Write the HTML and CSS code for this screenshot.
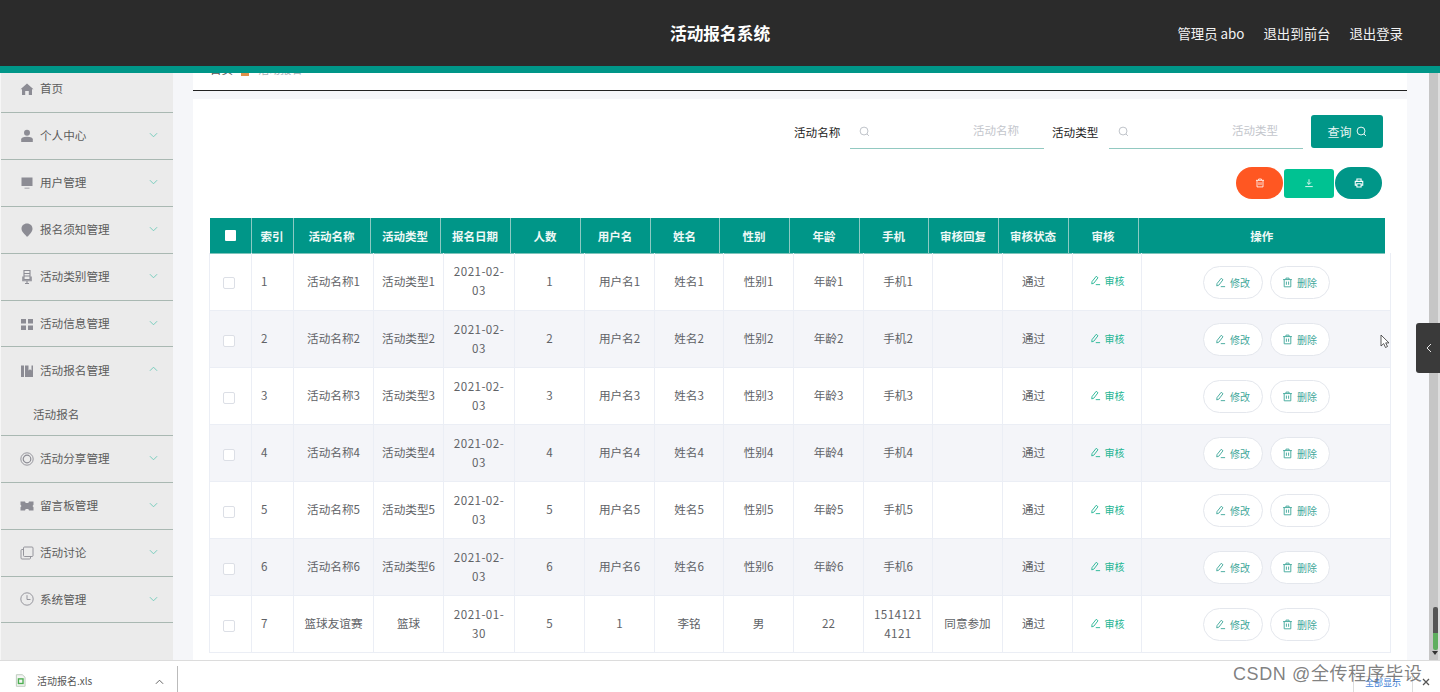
FILE: index.html
```html
<!DOCTYPE html>
<html lang="zh-CN">
<head>
<meta charset="utf-8">
<title>活动报名系统</title>
<link rel="stylesheet" href="styles.css">
</head>
<body>
<svg class="sprite" aria-hidden="true">
  <symbol id="i-pen" viewBox="0 0 12 12"><path d="M6.8 1.4 8.7 3 4.2 8.9 1.9 9.7 2.2 7.2Z" fill="none" stroke="currentColor"/><path d="M6.3 10.5H11" fill="none" stroke="currentColor"/></symbol>
  <symbol id="i-trash" viewBox="0 0 12 12"><path d="M1.2 2.8H10.800M4.300 2.500V1.200H7.700V2.500M2.400 2.800V10.700H9.600V2.800M4.800 5V8.500M7.200 5V8.500" fill="none" stroke="currentColor"/></symbol>
  <symbol id="i-search" viewBox="0 0 12 12"><circle cx="5.500" cy="5.500" r="4.300" fill="none" stroke="currentColor"/><path d="M8.700 8.700 10.800 10.800" fill="none" stroke="currentColor"/></symbol>
  <symbol id="i-down" viewBox="0 0 12 12"><path d="M6 1.500V7.500M3.500 5.200 6 7.700 8.500 5.200M1.500 10.300H10.500" fill="none" stroke="currentColor"/></symbol>
  <symbol id="i-print" viewBox="0 0 12 12"><path d="M3.500 4V1.200H8.500V4M3.500 8.500H1.500V4H10.500V8.500H8.500M3.500 6.800H8.500V10.800H3.500Z" fill="none" stroke="currentColor" stroke-width="1.300"/></symbol>
  <symbol id="i-chev" viewBox="0 0 10 6"><path d="M1 1 5 5 9 1" fill="none" stroke="currentColor"/></symbol>
  <symbol id="i-chev-up" viewBox="0 0 10 6"><path d="M1 5 5 1 9 5" fill="none" stroke="currentColor"/></symbol>
  <symbol id="m-home" viewBox="0 0 14 14"><path d="M7 1.500 13.500 7.300 12 7.300V13H8.800V9H5.200V13H2V7.300H.5Z" fill="currentColor"/></symbol>
  <symbol id="m-user" viewBox="0 0 14 14"><circle cx="7" cy="3.800" r="3" fill="currentColor"/><path d="M1.200 13V10.300C1.200 8.800 3 7.800 7 7.800S12.800 8.800 12.800 10.300V13Z" fill="currentColor"/></symbol>
  <symbol id="m-screen" viewBox="0 0 14 14"><path d="M1.500 1.500H12.500V10H1.500ZM4.500 11.700H9.500V12.500H4.500Z" fill="currentColor"/></symbol>
  <symbol id="m-pin" viewBox="0 0 14 14"><path d="M7 .5C10.300.5 12.500 2.800 12.500 5.700 12.500 9 9.500 11.300 7.800 13.500H6.500C5.800 11.500 1.500 9.300 1.500 5.700 1.500 2.800 3.700.5 7 .5Z" fill="currentColor"/></symbol>
  <symbol id="m-mic" viewBox="0 0 14 14"><path d="M4 .5H10V9.500H4ZM2.800 6.500V10.800H11.200V6.500M5 13.500H9M7 10.800V13.500M4.500 3.500H9.500M4.500 6H9.500" fill="none" stroke="currentColor" stroke-width="1.100"/></symbol>
  <symbol id="m-grid" viewBox="0 0 14 14"><path d="M1 2H6V6.500H1ZM8 2H13V6.500H8ZM1 8.500H6V13H1ZM8 8.500H13V13H8Z" fill="currentColor"/></symbol>
  <symbol id="m-book" viewBox="0 0 14 14"><path d="M1 1.500H4V13H1ZM5 1.500H8.500V6.500L10 5.200 11.500 6.500V1.500H13V13H5Z" fill="currentColor"/></symbol>
  <symbol id="m-ring" viewBox="0 0 14 14"><circle cx="7" cy="7" r="6.200" fill="none" stroke="currentColor" stroke-width=".9"/><circle cx="7" cy="7" r="3.800" fill="none" stroke="currentColor" stroke-width="1.200"/></symbol>
  <symbol id="m-ticket" viewBox="0 0 14 14"><path d="M.5 2.500H5L5.700 4H8.300L9 2.500H13.500V5.700L12.500 7 13.500 8.300V11.500H9L8.300 10H5.700L5 11.500H.5V8.300L1.500 7 .5 5.700Z" fill="currentColor"/></symbol>
  <symbol id="m-copy" viewBox="0 0 14 14"><path d="M4.500 1H12A1 1 0 0 1 13 2V9.500A1 1 0 0 1 12 10.500H4.500A1 1 0 0 1 3.500 9.500V2A1 1 0 0 1 4.500 1ZM3.500 3.500H2A1 1 0 0 0 1 4.500V12A1 1 0 0 0 2 13H9.500A1 1 0 0 0 10.500 12V10.500" fill="none" stroke="currentColor" stroke-width=".9"/></symbol>
  <symbol id="m-clock" viewBox="0 0 14 14"><circle cx="7" cy="7" r="6.200" fill="none" stroke="currentColor" stroke-width=".9"/><path d="M7 3.200V7.500H10.500" fill="none" stroke="currentColor" stroke-width=".9"/></symbol>
</svg>

<header class="topbar">
  <div class="brand">活动报名系统</div>
  <nav class="top-links"><span>管理员 abo</span><span>退出到前台</span><span>退出登录</span></nav>
</header>

<div class="workspace">
  <aside class="sidebar">
    <div class="menu-item first"><svg class="m-icon"><use href="#m-home"/></svg><span>首页</span></div>
    <div class="menu-item"><svg class="m-icon"><use href="#m-user"/></svg><span>个人中心</span><svg class="chev"><use href="#i-chev"/></svg></div>
    <div class="menu-item"><svg class="m-icon"><use href="#m-screen"/></svg><span>用户管理</span><svg class="chev"><use href="#i-chev"/></svg></div>
    <div class="menu-item"><svg class="m-icon"><use href="#m-pin"/></svg><span>报名须知管理</span><svg class="chev"><use href="#i-chev"/></svg></div>
    <div class="menu-item"><svg class="m-icon"><use href="#m-mic"/></svg><span>活动类别管理</span><svg class="chev"><use href="#i-chev"/></svg></div>
    <div class="menu-item"><svg class="m-icon"><use href="#m-grid"/></svg><span>活动信息管理</span><svg class="chev"><use href="#i-chev"/></svg></div>
    <div class="menu-group">
      <div class="menu-head"><svg class="m-icon"><use href="#m-book"/></svg><span>活动报名管理</span><svg class="chev"><use href="#i-chev-up"/></svg></div>
      <div class="menu-sub">活动报名</div>
    </div>
    <div class="menu-item"><svg class="m-icon"><use href="#m-ring"/></svg><span>活动分享管理</span><svg class="chev"><use href="#i-chev"/></svg></div>
    <div class="menu-item"><svg class="m-icon"><use href="#m-ticket"/></svg><span>留言板管理</span><svg class="chev"><use href="#i-chev"/></svg></div>
    <div class="menu-item"><svg class="m-icon"><use href="#m-copy"/></svg><span>活动讨论</span><svg class="chev"><use href="#i-chev"/></svg></div>
    <div class="menu-item"><svg class="m-icon"><use href="#m-clock"/></svg><span>系统管理</span><svg class="chev"><use href="#i-chev"/></svg></div>
  </aside>

  <main class="main">
    <div class="crumbs"><span class="crumb-home">首页</span><i class="crumb-dot"></i><span class="crumb-now">活动报名</span></div>
    <section class="panel">
      <form class="search">
        <label class="s-label">活动名称</label>
        <div class="s-field"><svg class="s-icon"><use href="#i-search"/></svg><input class="s-input" placeholder="活动名称"></div>
        <label class="s-label s-label2">活动类型</label>
        <div class="s-field"><svg class="s-icon"><use href="#i-search"/></svg><input class="s-input" placeholder="活动类型"></div>
        <button class="s-btn" type="button">查询<svg class="s-btn-icon"><use href="#i-search"/></svg></button>
      </form>
      <div class="tools">
        <button class="tool tool-del" type="button"><svg class="tool-icon"><use href="#i-trash"/></svg></button>
        <button class="tool tool-down" type="button"><svg class="tool-icon"><use href="#i-down"/></svg></button>
        <button class="tool tool-print" type="button"><svg class="tool-icon"><use href="#i-print"/></svg></button>
      </div>

      <table class="thead">
        <colgroup><col class="h0"><col class="h1"><col class="h2"><col class="h3"><col class="h4"><col class="h5"><col class="h6"><col class="h7"><col class="h8"><col class="h9"><col class="h10"><col class="h11"><col class="h12"><col class="h13"><col class="h14"></colgroup>
        <tr><th><i class="head-check"></i></th><th>索引</th><th>活动名称</th><th>活动类型</th><th>报名日期</th><th>人数</th><th>用户名</th><th>姓名</th><th>性别</th><th>年龄</th><th>手机</th><th>审核回复</th><th>审核状态</th><th>审核</th><th>操作</th></tr>
      </table>

      <table class="tbody">
        <colgroup><col class="b0"><col class="b1"><col class="b2"><col class="b3"><col class="b4"><col class="b5"><col class="b6"><col class="b7"><col class="b8"><col class="b9"><col class="b10"><col class="b11"><col class="b12"><col class="b13"><col class="b14"></colgroup>
        <tr><td><i class="check"></i></td><td class="idx">1</td><td>活动名称1</td><td>活动类型1</td><td>2021-02-03</td><td>1</td><td>用户名1</td><td>姓名1</td><td>性别1</td><td>年龄1</td><td>手机1</td><td></td><td class="status">通过</td><td><span class="audit"><svg class="a-icon"><use href="#i-pen"/></svg>审核</span></td><td><div class="ops"><span class="op"><svg class="a-icon"><use href="#i-pen"/></svg>修改</span><span class="op"><svg class="a-icon"><use href="#i-trash"/></svg>删除</span></div></td></tr>
        <tr><td><i class="check"></i></td><td class="idx">2</td><td>活动名称2</td><td>活动类型2</td><td>2021-02-03</td><td>2</td><td>用户名2</td><td>姓名2</td><td>性别2</td><td>年龄2</td><td>手机2</td><td></td><td class="status">通过</td><td><span class="audit"><svg class="a-icon"><use href="#i-pen"/></svg>审核</span></td><td><div class="ops"><span class="op"><svg class="a-icon"><use href="#i-pen"/></svg>修改</span><span class="op"><svg class="a-icon"><use href="#i-trash"/></svg>删除</span></div></td></tr>
        <tr><td><i class="check"></i></td><td class="idx">3</td><td>活动名称3</td><td>活动类型3</td><td>2021-02-03</td><td>3</td><td>用户名3</td><td>姓名3</td><td>性别3</td><td>年龄3</td><td>手机3</td><td></td><td class="status">通过</td><td><span class="audit"><svg class="a-icon"><use href="#i-pen"/></svg>审核</span></td><td><div class="ops"><span class="op"><svg class="a-icon"><use href="#i-pen"/></svg>修改</span><span class="op"><svg class="a-icon"><use href="#i-trash"/></svg>删除</span></div></td></tr>
        <tr><td><i class="check"></i></td><td class="idx">4</td><td>活动名称4</td><td>活动类型4</td><td>2021-02-03</td><td>4</td><td>用户名4</td><td>姓名4</td><td>性别4</td><td>年龄4</td><td>手机4</td><td></td><td class="status">通过</td><td><span class="audit"><svg class="a-icon"><use href="#i-pen"/></svg>审核</span></td><td><div class="ops"><span class="op"><svg class="a-icon"><use href="#i-pen"/></svg>修改</span><span class="op"><svg class="a-icon"><use href="#i-trash"/></svg>删除</span></div></td></tr>
        <tr><td><i class="check"></i></td><td class="idx">5</td><td>活动名称5</td><td>活动类型5</td><td>2021-02-03</td><td>5</td><td>用户名5</td><td>姓名5</td><td>性别5</td><td>年龄5</td><td>手机5</td><td></td><td class="status">通过</td><td><span class="audit"><svg class="a-icon"><use href="#i-pen"/></svg>审核</span></td><td><div class="ops"><span class="op"><svg class="a-icon"><use href="#i-pen"/></svg>修改</span><span class="op"><svg class="a-icon"><use href="#i-trash"/></svg>删除</span></div></td></tr>
        <tr><td><i class="check"></i></td><td class="idx">6</td><td>活动名称6</td><td>活动类型6</td><td>2021-02-03</td><td>6</td><td>用户名6</td><td>姓名6</td><td>性别6</td><td>年龄6</td><td>手机6</td><td></td><td class="status">通过</td><td><span class="audit"><svg class="a-icon"><use href="#i-pen"/></svg>审核</span></td><td><div class="ops"><span class="op"><svg class="a-icon"><use href="#i-pen"/></svg>修改</span><span class="op"><svg class="a-icon"><use href="#i-trash"/></svg>删除</span></div></td></tr>
        <tr><td><i class="check"></i></td><td class="idx">7</td><td>篮球友谊赛</td><td>篮球</td><td>2021-01-30</td><td>5</td><td>1</td><td>李铭</td><td>男</td><td>22</td><td class="phone">15141214121</td><td>同意参加</td><td class="status">通过</td><td><span class="audit"><svg class="a-icon"><use href="#i-pen"/></svg>审核</span></td><td><div class="ops"><span class="op"><svg class="a-icon"><use href="#i-pen"/></svg>修改</span><span class="op"><svg class="a-icon"><use href="#i-trash"/></svg>删除</span></div></td></tr>
      </table>
    </section>
  </main>

  <div class="gutter"></div>
  <div class="scrollbar"><div class="thumb"></div><i class="scroll-arrow"></i></div>
</div>

<footer class="downloads">
  <div class="dl-file">
    <svg class="dl-icon" viewBox="0 0 12 14"><path d="M1.500.7H8L11 3.500V13.300H1.500Z" fill="#f4f4f4" stroke="#b9c9b9"/><rect x="3" y="4.500" width="6.500" height="6.500" fill="#4caf50"/><rect x="4.500" y="6" width="3.500" height="3.500" fill="#f4f4f4"/></svg>
    <span class="dl-name">活动报名.xls</span>
    <svg class="dl-chev"><use href="#i-chev-up"/></svg>
  </div>
  <div class="dl-all">全部显示</div>
  <svg class="dl-close" viewBox="0 0 8 8"><path d="M1 1 7 7M7 1 1 7" fill="none" stroke="#555" stroke-width="1.300"/></svg>
</footer>

<div class="handle"><svg class="handle-chev" viewBox="0 0 6 10"><path d="M5 1 1 5 5 9" fill="none" stroke="#e8e8e8"/></svg></div>
<svg class="cursor" viewBox="0 0 10 15"><path d="M1 1V12L3.700 9.600 5.500 13.500 7.500 12.500 5.700 8.900H9Z" fill="#fff" stroke="#333" stroke-width=".8"/></svg>
<div class="watermark">CSDN @全传程序毕设</div>
</body>
</html>
```
FILE: styles.css
```css
* { box-sizing: border-box; }
html, body { margin: 0; height: 100%; overflow: hidden; }
body {
  width: 1440px;
  height: 692px;
  position: relative;
  display: flex;
  flex-direction: column;
  font-family: "Noto Sans CJK SC", "Noto Sans", sans-serif;
  font-size: 11.6px;
  color: #606266;
  background: #f5f6f9;
}
i { display: block; }
.sprite { width: 0; height: 0; position: absolute; }

/* top bar */
.topbar {
  flex: 0 0 73px;
  display: flex;
  align-items: center;
  justify-content: flex-end;
  padding: 0 37px 0 0;
  background: #2b2b2b;
  border-bottom: 7px solid #009688;
  position: relative;
  color: #fff;
}
.brand {
  position: absolute;
  left: 670px;
  top: 21px;
  font-size: 16.7px;
  line-height: 24px;
  font-weight: 700;
}
.top-links { display: flex; gap: 19px; font-size: 13.4px; line-height: 20px; color: #f2f2f2; }

/* workspace */
.workspace { flex: 0 0 587px; display: flex; overflow: hidden; }

.sidebar {
  flex: 0 0 173px;
  background: #ebebeb;
  border-left: 1px solid #f6f6f6;
  color: #5c5c5c;
}
.menu-item, .menu-head {
  height: 46.9px;
  display: flex;
  align-items: center;
  padding-left: 19px;
  position: relative;
}
.menu-item span, .menu-head span { margin-top: -1px; }
.menu-item { border-bottom: 1px solid #a9b8b2; }
.menu-item.first { height: 40px; padding-bottom: 8px; }
.menu-group { height: 88.4px; border-bottom: 1px solid #a9b8b2; }
.menu-sub { padding-left: 32px; line-height: 17px; margin-top: 12px; }
.m-icon { width: 14px; height: 14px; color: #8c8c94; margin-right: 6px; flex: none; }
.chev { width: 9px; height: 6px; color: #6cc9b8; position: absolute; left: 148px; top: 19px; }

/* main */
.main { flex: 0 0 1214px; min-width: 0; margin-left: 20px; display: flex; flex-direction: column; }
.crumbs {
  flex: 0 0 18px;
  background: #fff;
  border-bottom: 1px solid #222;
  display: flex;
  align-items: flex-end;
  overflow: hidden;
  padding: 0 0 14px 17px;
  color: #555;
  line-height: 14px;
}
.crumb-dot { width: 8px; height: 8px; margin: 0 9px 0 8px; background: #e0914b; }
.crumb-now { color: #a9b0b5; font-size: 11px; }

.panel {
  margin-top: 8px;
  flex: 1;
  background: #fff;
  padding: 16px 17px 0 16px;
}
.search { display: flex; justify-content: flex-end; align-items: center; height: 33px; margin-right: 7px; }
.s-label { color: #222; width: 46px; white-space: nowrap; margin-right: 10px; padding-top: 1px; }
.s-label2 { margin-left: 8px; margin-right: 11px; }
.s-field {
  width: 194px;
  height: 34px;
  border-bottom: 1px solid #92c9c1;
  display: flex;
  align-items: center;
  padding-left: 9px;
}
.s-icon { width: 11px; height: 11px; color: #b9bdc4; flex: none; }
.s-input {
  flex: 1;
  min-width: 0;
  border: 0;
  outline: 0;
  background: transparent;
  text-align: right;
  padding: 0 25px 2px 0;
  font: 11.5px/16px "Noto Sans CJK SC", sans-serif;
}
.s-input::placeholder { color: #c3c6cc; opacity: 1; }
.s-btn {
  width: 72px;
  height: 33px;
  margin-left: 8px;
  border: 0;
  border-radius: 3px;
  background: #009688;
  color: #e8f5f3;
  font: 12px/16px "Noto Sans CJK SC", sans-serif;
  display: flex;
  align-items: center;
  justify-content: center;
  gap: 4px;
  padding: 0;
}
.s-btn-icon { width: 11px; height: 11px; color: #fff; }

.tools { display: flex; justify-content: flex-end; align-items: center; height: 32px; margin-top: 19px; padding-right: 8px; gap: 1px; }
.tool { border: 0; padding: 0; display: flex; align-items: center; justify-content: center; color: #fff; }
.tool-icon { width: 10px; height: 10px; }
.tool-del { width: 47px; height: 32px; border-radius: 16px; background: #ff5722; }
.tool-down { width: 50px; height: 29px; border-radius: 3px; background: #00c292; }
.tool-print { width: 47px; height: 32px; border-radius: 16px; background: #009688; }

/* tables */
table { border-collapse: collapse; table-layout: fixed; }
.thead { width: 1175px; height: 36px; margin: 19px 0 0 1px; background: #009688; color: #eef8f6; }
.thead th { padding: 0; font-size: 11.5px; font-weight: 700; border-left: 1px solid #8ccac3; border-bottom: 1px solid #7ec4bb; }
.thead th:first-child { border-left: 0; }
.h0 { width: 41px; } .h1 { width: 42px; } .h2 { width: 77px; } .h3 { width: 70px; } .h4 { width: 70px; }
.h5 { width: 70px; } .h6 { width: 70px; } .h7 { width: 69px; } .h8 { width: 70px; } .h9 { width: 70px; }
.h10 { width: 69px; } .h11 { width: 70px; } .h12 { width: 70px; } .h13 { width: 70px; } .h14 { width: 247px; }
.head-check { width: 11px; height: 11px; background: #fff; border-radius: 1px; margin: 0 0 0 15px; }

.tbody { width: 1181px; margin-top: -1px; }
.tbody tr { height: 57px; }
.tbody tr:nth-child(even) { background: #f4f5f9; }
.tbody td {
  padding: 0 9px;
  text-align: center;
  line-height: 19px;
  word-break: break-all;
  border: 1px solid #ebeef5;
  border-top: 0;
}
.tbody td.idx { text-align: left; }
.tbody td.status { padding: 0 17px 0 9px; }
.tbody td:nth-child(5), .tbody td.phone { letter-spacing: .45px; }
.b0 { width: 42px; } .b1 { width: 42px; } .b2 { width: 80px; } .b3 { width: 70px; } .b4 { width: 71px; }
.b5 { width: 70px; } .b6 { width: 70px; } .b7 { width: 69px; } .b8 { width: 70px; } .b9 { width: 70px; }
.b10 { width: 69px; } .b11 { width: 70px; } .b12 { width: 70px; } .b13 { width: 69px; } .b14 { width: 249px; }
.tbody td:nth-child(3), .tbody td:nth-child(4) { padding: 0 2px; }
.check { width: 12px; height: 12px; border: 1px solid #dcdfe6; border-radius: 2px; background: #fff; margin: 4px 0 0 4px; }
.audit { display: inline-flex; align-items: center; gap: 4px; color: #23b594; font-size: 10px; white-space: nowrap; }
.a-icon { width: 11px; height: 11px; flex: none; }
.ops { display: flex; justify-content: center; gap: 7px; margin-top: 2px; }
.op {
  width: 60px;
  height: 33px;
  border: 1px solid #e4e7ed;
  border-radius: 17px;
  background: #fff;
  color: #3fa79a;
  font-size: 10px;
  display: flex;
  align-items: center;
  justify-content: center;
  gap: 4px;
}

/* right edge */
.gutter { flex: 0 0 22px; background: #f7f8fb; }
.scrollbar { flex: 0 0 11px; background: #c6c6c6; border-right: 2px solid #dedede; display: flex; flex-direction: column; align-items: flex-end; justify-content: flex-end; padding-bottom: 5px; }
.thumb {
  width: 5px;
  height: 43px;
  background: linear-gradient(#555 0 60%, #5fae5f 60% 100%);
  border-radius: 2px;
}
.scroll-arrow { width: 0; height: 0; border: 3px solid transparent; border-top: 4px solid #333; border-bottom: 0; margin: 1px 0 0; }

/* download bar */
.downloads {
  flex: 0 0 32px;
  background: #fff;
  border-top: 1px solid #dcdcdc;
  display: flex;
  align-items: flex-end;
  position: relative;
}
.dl-file { width: 178px; height: 26px; border-right: 1px solid #bbb; display: flex; align-items: center; padding: 3px 0 0 15px; position: relative; }
.dl-icon { width: 11px; height: 13px; flex: none; }
.dl-name { margin-left: 11px; font-size: 10px; color: #555; white-space: nowrap; }
.dl-chev { width: 9px; height: 6px; color: #555; position: absolute; left: 155px; top: 13px; }
.dl-all {
  margin-left: auto;
  margin-right: 27px;
  width: 60px;
  height: 16px;
  border: 1px solid #ddd;
  border-bottom: 0;
  border-radius: 2px 2px 0 0;
  color: #3f7fd6;
  font-size: 9px;
  line-height: 12px;
  text-align: center;
}
.dl-close { position: absolute; left: 1422px; top: 17px; width: 8px; height: 8px; }

/* overlays */
.handle {
  position: absolute;
  left: 1416px;
  top: 323px;
  width: 24px;
  height: 50px;
  background: #3a3a3a;
  border-radius: 3px 0 0 3px;
  display: flex;
  align-items: center;
  justify-content: center;
  padding-left: 2px;
}
.handle-chev { width: 6px; height: 10px; }
.cursor { position: absolute; left: 1380px; top: 334px; width: 10px; height: 15px; }
.watermark {
  position: absolute;
  left: 1233px;
  top: 661px;
  font-family: "Liberation Sans", "Noto Sans CJK SC", sans-serif;
  font-size: 18px;
  line-height: 26px;
  letter-spacing: .6px;
  white-space: nowrap;
  color: rgba(95, 95, 95, .8);
}
```
